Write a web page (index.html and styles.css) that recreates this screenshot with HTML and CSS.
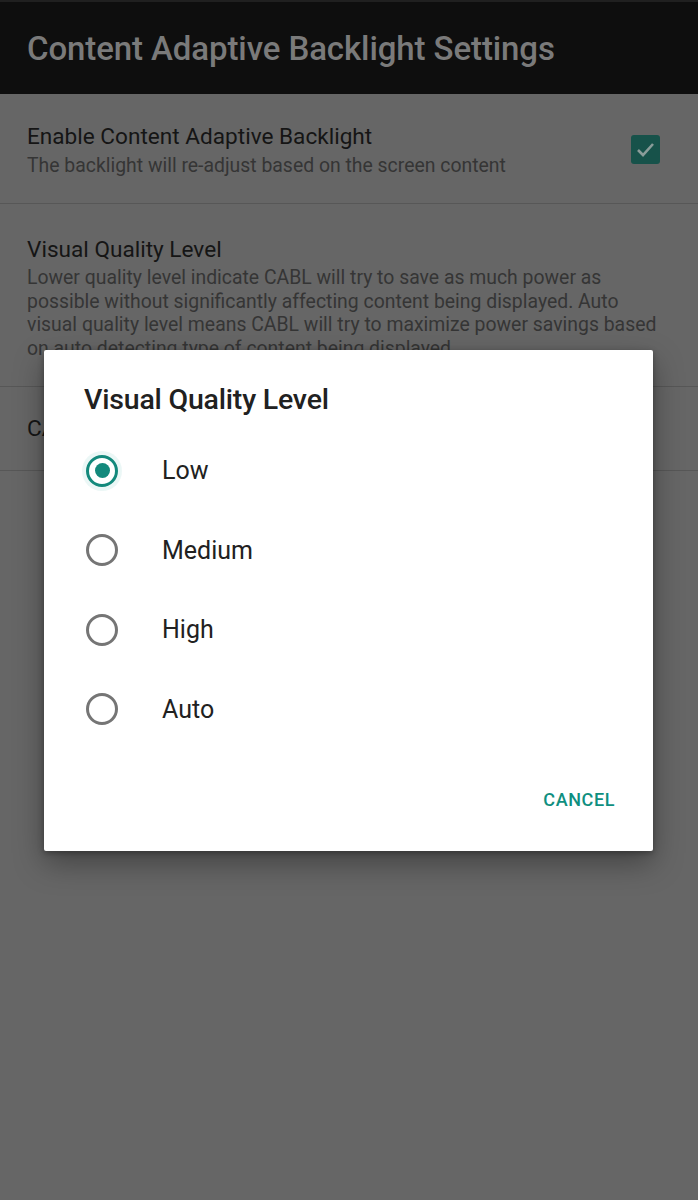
FILE: index.html
```html
<!DOCTYPE html>
<html lang="en">
<head>
    <meta charset="UTF-8">
    <meta name="viewport" content="width=device-width, initial-scale=1.0">
    <title>Content Adaptive Backlight Settings</title>
    <link rel="stylesheet" href="styles.css">
</head>
<body>

<div class="app-bar">
    <h1>Content Adaptive Backlight Settings</h1>
</div>

<div class="pref-list">
    <div class="pref-row pref-enable">
        <div class="pref-text">
            <div class="pref-title">Enable Content Adaptive Backlight</div>
            <div class="pref-summary">The backlight will re-adjust based on the screen content</div>
        </div>
        <div class="checkbox">
            <svg width="29" height="29" viewBox="0 0 29 29">
                <path d="M7 15 L12 20 L22 9" fill="none" stroke="#8a9c99" stroke-width="2.6"/>
            </svg>
        </div>
    </div>

    <div class="pref-row pref-quality">
        <div class="pref-text">
            <div class="pref-title">Visual Quality Level</div>
            <div class="pref-summary">Lower quality level indicate CABL will try to save as much power as possible without significantly affecting content being displayed. Auto visual quality level means CABL will try to maximize power savings based on auto detecting type of content being displayed.</div>
        </div>
    </div>

    <div class="pref-row pref-strength">
        <div class="pref-text">
            <div class="pref-title">CABL Strength</div>
        </div>
    </div>
</div>

<!-- dialog over the dimmed list -->
<div class="dialog">
    <h2>Visual Quality Level</h2>
    <div class="choice-list">
        <div class="choice">
            <span class="radio checked"></span>
            <span class="choice-label">Low</span>
        </div>
        <div class="choice">
            <span class="radio"></span>
            <span class="choice-label">Medium</span>
        </div>
        <div class="choice">
            <span class="radio"></span>
            <span class="choice-label">High</span>
        </div>
        <div class="choice">
            <span class="radio"></span>
            <span class="choice-label">Auto</span>
        </div>
    </div>
    <div class="dialog-actions">
        <button class="text-btn">CANCEL</button>
    </div>
</div>

</body>
</html>
```

FILE: styles.css
```css
body {
    font-family: Roboto, "Noto Sans", sans-serif;
    margin: 0;
    padding: 0;
    background-color: #666666;
    height: 1200px;
    overflow: hidden;
}

.app-bar {
    height: 94px;
    background: #0e0e0e;
    border-top: 2px solid #202020;
    box-sizing: border-box;
    display: flex;
    align-items: center;
    padding: 0 27px 0;
}

.app-bar h1 {
    margin: 0;
    font-size: 33px;
    font-weight: 500;
    color: #7a7a7a;
    letter-spacing: -0.1px;
}

.pref-row {
    display: flex;
    align-items: center;
    padding: 0 27px;
    border-bottom: 1px solid #575757;
}

.pref-text {
    flex: 1;
}

.pref-title {
    font-size: 22.6px;
    line-height: 26px;
    color: #151515;
}

.pref-summary {
    font-size: 19.4px;
    line-height: 23.5px;
    color: #353535;
}

.pref-enable {
    height: 110px;
    box-sizing: border-box;
    padding-top: 4px;
}

.pref-enable .pref-summary {
    margin-top: 4px;
}

.pref-quality {
    height: 183px;
    box-sizing: border-box;
    align-items: flex-start;
    padding-top: 33px;
}

.pref-quality .pref-summary {
    margin-top: 3px;
}

.pref-strength {
    height: 84px;
    box-sizing: border-box;
}

.checkbox {
    width: 29px;
    height: 29px;
    border-radius: 3px;
    background: #17524a;
    margin-right: 11px;
    margin-bottom: 2px;
}

.checkbox svg {
    display: block;
}

.dialog {
    position: absolute;
    left: 44px;
    top: 350px;
    width: 609px;
    height: 501px;
    background: #ffffff;
    border-radius: 2px;
    box-shadow: 0 12px 30px rgba(0, 0, 0, 0.35), 0 2px 6px rgba(0, 0, 0, 0.3);
    box-sizing: border-box;
    padding: 34px 0 0 40px;
}

.dialog h2 {
    margin: 0;
    font-size: 28.5px;
    font-weight: 500;
    line-height: 32px;
    color: #212121;
    letter-spacing: -0.2px;
}

.choice-list {
    margin-top: 15px;
}

.choice {
    display: flex;
    align-items: center;
    height: 79.5px;
}

.radio {
    width: 32px;
    height: 32px;
    border: 3.5px solid #757575;
    border-radius: 50%;
    box-sizing: border-box;
    margin-left: 2px;
    display: flex;
    align-items: center;
    justify-content: center;
}

.radio.checked {
    border-color: #13897c;
    box-shadow: 0 0 0 4px rgba(0, 150, 136, 0.08);
}

.radio.checked::after {
    content: "";
    width: 15px;
    height: 15px;
    border-radius: 50%;
    background: #13897c;
}

.choice-label {
    margin-left: 44px;
    font-size: 25px;
    color: #212121;
}

.dialog-actions {
    display: flex;
    justify-content: flex-end;
    padding-right: 38px;
    margin-top: 40px;
}

.text-btn {
    background: none;
    border: none;
    padding: 0;
    font-family: Roboto, "Noto Sans", sans-serif;
    font-size: 18px;
    font-weight: 500;
    color: #0f8f80;
    letter-spacing: 0.6px;
    cursor: pointer;
}
```
